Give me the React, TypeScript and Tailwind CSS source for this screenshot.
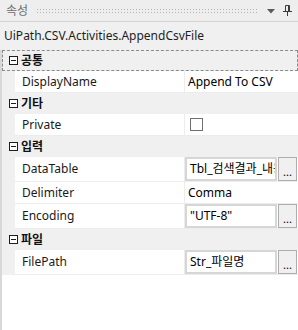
import React from "react";

type Row =
    | { kind: "cat"; label: string; focus?: boolean }
    | { kind: "text"; name: string; value: string }
    | { kind: "check"; name: string }
    | { kind: "box"; name: string; value: string };

const rows: Row[] = [
    { kind: "cat", label: "공통", focus: true },
    { kind: "text", name: "DisplayName", value: "Append To CSV" },
    { kind: "cat", label: "기타" },
    { kind: "check", name: "Private" },
    { kind: "cat", label: "입력" },
    { kind: "box", name: "DataTable", value: "Tbl_검색결과_내용" },
    { kind: "text", name: "Delimiter", value: "Comma" },
    { kind: "box", name: "Encoding", value: "\"UTF-8\"" },
    { kind: "cat", label: "파일" },
    { kind: "box", name: "FilePath", value: "Str_파일명" },
];

function MinusBox() {
    return (
        <svg width="9" height="9" viewBox="0 0 9 9" className="shrink-0">
            <rect x="0.5" y="0.5" width="8" height="8" fill="#fff" stroke="#1e1e1e" />
            <line x1="2" y1="4.5" x2="7" y2="4.5" stroke="#1e1e1e" />
        </svg>
    );
}

function PinIcon() {
    return (
        <svg width="9" height="11" viewBox="0 0 9 11">
            <path d="M0 6.5h9M2.5 0.5h4M6.5 0.5v6M2.5 0.5v6M4.5 6.5v4.5" stroke="#3c3c3c" fill="none" />
            <rect x="5" y="1" width="1.5" height="5" fill="#3c3c3c" />
        </svg>
    );
}

function PropRow({ row }: { row: Row }) {
    if (row.kind === "cat") {
        return (
            <div
                className={
                    "flex h-[21px] items-center bg-[#f0f0f0] " +
                    (row.focus ? "border border-dashed border-[#8a8a8a]" : "")
                }
            >
                <div className={"flex justify-center " + (row.focus ? "w-[18px] pl-[2px]" : "w-[19px] pl-[3px]")}>
                    <MinusBox />
                </div>
                <span className="font-bold text-[#111]">{row.label}</span>
            </div>
        );
    }
    const tall = row.kind === "box";
    return (
        <div className={"flex " + (tall ? "h-[25px]" : "h-[22px]")}>
            <div className="w-[13px] shrink-0 bg-[#f0f0f0]" />
            <div className="flex w-[170px] shrink-0 items-center border-b border-r border-[#ececec] pl-[7px] text-[#1a1a1a]">
                {row.name}
            </div>
            <div className="flex min-w-0 flex-1 border-b border-[#ececec]">
                {row.kind === "text" && (
                    <span className="flex items-center pl-[3px] text-black">{row.value}</span>
                )}
                {row.kind === "check" && (
                    <div className="flex items-center pl-[5px]">
                        <div className="h-[13px] w-[13px] border border-[#6f6f6f] bg-white" />
                    </div>
                )}
                {row.kind === "box" && (
                    <div className="flex min-w-0 flex-1 gap-[1px] pr-[1px]">
                        <div className="flex min-w-0 flex-1 items-center overflow-hidden whitespace-nowrap border-2 border-[#d6d6d6] bg-white pl-[3px] text-black">
                            {row.value}
                        </div>
                        <div className="flex h-[24px] w-[19px] shrink-0 items-end justify-center border border-[#adadad] bg-[#f0f0f0] pb-[3px] text-[11px] leading-none text-black">
                            ...
                        </div>
                    </div>
                )}
            </div>
        </div>
    );
}

export default function App() {
    return (
        <div
            className="flex h-[330px] w-[298px] flex-col overflow-hidden bg-white text-[12px] leading-none"
            style={{ fontFamily: '"Noto Sans", "Noto Sans CJK KR", sans-serif' }}
        >
            <div className="flex h-[22px] shrink-0 items-center border-b border-[#d4d4d4] bg-[#eeeeee] pl-[6px] pr-[6px]">
                <span className="text-[#6e6e6e]">속성</span>
                <div className="ml-[8px] mr-[8px] h-[5px] flex-1 bg-[radial-gradient(circle,#b4b4b4_0.7px,transparent_0.8px)] bg-[length:3px_3px]" />
                <svg width="8" height="5" viewBox="0 0 8 5" className="mr-[8px] mt-[2px]">
                    <path d="M0 0h8L4 4.5z" fill="#5a5a5a" />
                </svg>
                <PinIcon />
            </div>
            <div className="flex h-[28px] shrink-0 items-center bg-[#f0f0f0] pl-[4px] text-[12px] text-[#1e1e1e]">
                UiPath.CSV.Activities.AppendCsvFile
            </div>
            <div className="flex flex-1 flex-col border-l-2 border-[#d8d8d8]">
                {rows.map((r, i) => (
                    <PropRow key={i} row={r} />
                ))}
            </div>
        </div>
    );
}
